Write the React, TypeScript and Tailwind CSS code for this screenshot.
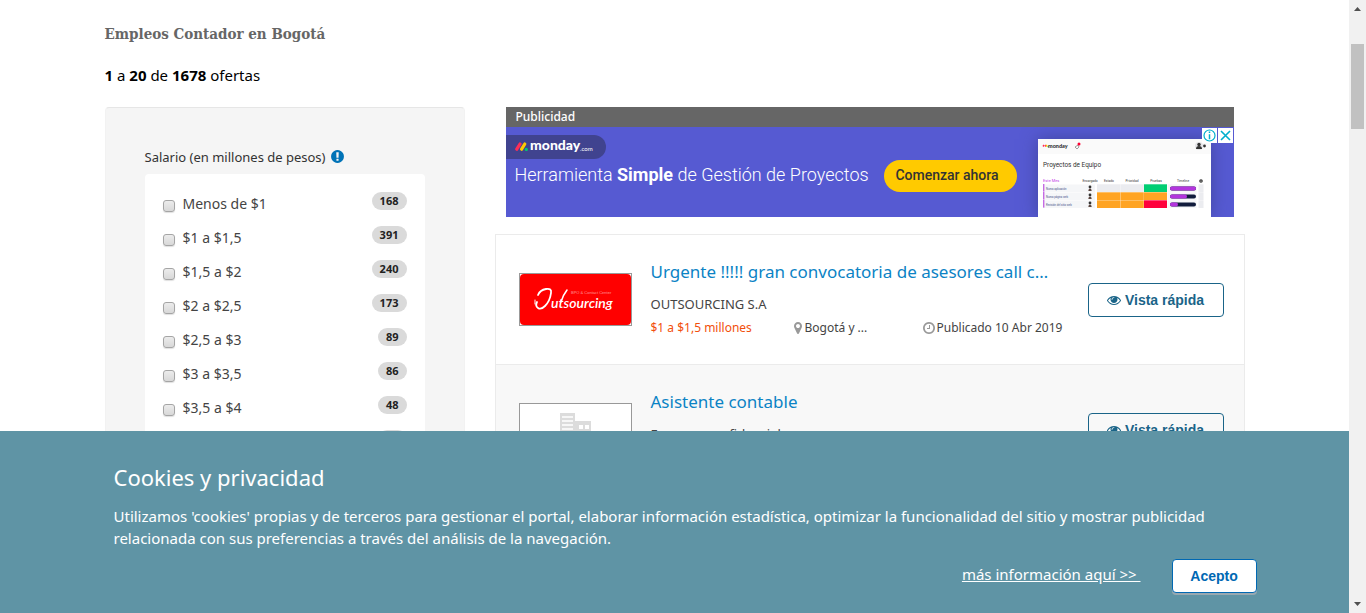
import React from "react";

const salaryRanges = [
  { label: "Menos de $1", count: 168 },
  { label: "$1 a $1,5", count: 391 },
  { label: "$1,5 a $2", count: 240 },
  { label: "$2 a $2,5", count: 173 },
  { label: "$2,5 a $3", count: 89 },
  { label: "$3 a $3,5", count: 86 },
  { label: "$3,5 a $4", count: 48 },
  { label: "$4 a $4,5", count: 36 },
];

function Glyph({ d, className }: { d: string; className: string }) {
  return (
    <svg viewBox="0 0 1792 1792" fill="currentColor" aria-hidden="true" className={className}>
      <path d={d} />
    </svg>
  );
}

const eyePath =
  "M1664 960q-152-236-381-353 61 104 61 225 0 185-131.5 316.5t-316.5 131.5-316.5-131.5-131.5-316.5q0-121 61-225-229 117-381 353 133 205 333.5 326.5t434.5 121.5 434.5-121.5 333.5-326.5zm-720-384q0-20-14-34t-34-14q-125 0-214.5 89.5t-89.5 214.5q0 20 14 34t34 14 34-14 14-34q0-86 61-147t147-61q20 0 34-14t14-34zm848 384q0 34-20 69-140 230-376.5 368.5t-499.5 138.5-499.5-139-376.5-368q-20-35-20-69t20-69q140-229 376.5-368t499.5-139 499.5 139 376.5 368q20 35 20 69z";
const clockPath =
  "M1024 544v448q0 14-9 23t-23 9h-320q-14 0-23-9t-9-23v-64q0-14 9-23t23-9h224v-352q0-14 9-23t23-9h64q14 0 23 9t9 23zm416 352q0-148-73-273t-198-198-273-73-273 73-198 198-73 273 73 273 198 198 273 73 273-73 198-198 73-273zm224 0q0 209-103 385.5t-279.5 279.5-385.5 103-385.5-103-279.5-279.5-103-385.5 103-385.5 279.5-279.5 385.5-103 385.5 103 279.5 279.5 103 385.5z";
const markerPath =
  "M1152 640q0-106-75-181t-181-75-181 75-75 181 75 181 181 75 181-75 75-181zm256 0q0 109-33 179l-364 774q-16 33-47.5 52t-67.5 19-67.5-19-46.5-52l-365-774q-33-70-33-179 0-212 150-362t362-150 362 150 150 362z";
const alertPath =
  "M896 128q209 0 385.5 103t279.5 279.5 103 385.5-103 385.5-279.5 279.5-385.5 103-385.5-103-279.5-279.5-103-385.5 103-385.5 279.5-279.5 385.5-103zm128 1247v-190q0-14-9-23.5t-22-9.5h-192q-13 0-23 10t-10 23v190q0 13 10 23t23 10h192q13 0 22-9.5t9-23.5zm-2-344l18-621q0-12-10-18-10-8-24-8h-220q-14 0-24 8-10 6-10 18l17 621q0 10 10 17.5t24 7.5h185q14 0 23.5-7.5t10.5-17.5z";

function SalaryFilter() {
  return (
    <aside className="w-[360px] shrink-0 rounded border border-[#f2f2f2] border-t-[#e6e6e6] bg-[#f5f5f5] px-[39px] pt-[39px]">
      <h2 className="flex h-[27px] items-start gap-1 text-[13px] leading-5 text-[#333]">
        Salario (en millones de pesos)
        <Glyph d={alertPath} className="mt-[2px] size-[15px] text-[#0073b7]" />
      </h2>
      <ul className="rounded bg-white py-[10px] pr-[18px] pl-[18px]">
        {salaryRanges.map((range) => (
          <li key={range.label} className="flex h-[34px] items-center justify-between">
            <label className="flex items-center gap-2 pt-[6px] text-[14px] leading-5 text-[#444]">
              <input
                type="checkbox"
                className="mt-1 size-3 appearance-none rounded-[3px] border border-[#a5a5a5] bg-linear-to-b from-[#ececec] to-[#d8d8d8] shadow-[0_1px_1px_#e0e0e0]"
              />
              {range.label}
            </label>
            <span className="rounded-full bg-[#dadada] px-2 text-[11px] leading-[18px] font-bold text-[#222]">
              {range.count}
            </span>
          </li>
        ))}
      </ul>
    </aside>
  );
}

function MondayMark() {
  return (
    <svg viewBox="0 0 82 24" className="h-6 w-[82px]" role="img" aria-label="monday.com">
      <g strokeWidth="3.2" strokeLinecap="round">
        <path d="M1.8 14.200 5 9" stroke="#ff2d57" />
        <path d="M6.6 14.200 9.800 9" stroke="#ffc900" />
      </g>
      <circle cx="11.3" cy="14.4" r="1.6" fill="#00ca72" />
      <text x="15" y="15" fill="#fff" fontFamily="Lato, sans-serif" fontSize="14" fontWeight="900">
        monday
      </text>
      <text x="65" y="16" fill="#fff" fontFamily="Lato, sans-serif" fontSize="6">
        .com
      </text>
    </svg>
  );
}

function BoardPreview() {
  const columns = [
    ["Encargado", 52],
    ["Estado", 71],
    ["Prioridad", 94],
    ["Pruebas", 118],
    ["Timeline", 145],
  ] as const;
  const rows = [
    { name: "Nueva aplicación", y: 45, a: "#ebecf0", c: "#00ce73", bar: 26 },
    { name: "Nueva página web", y: 53, a: "#ffa423", c: "#ffa423", bar: 17 },
    { name: "Revisión del sitio web", y: 61, a: "#ffa423", c: "#ff003c", bar: 8 },
  ];
  return (
    <svg viewBox="0 0 173 78" className="h-[78px] w-[173px] shadow-[0_0_16px_#40459f]" aria-hidden="true" fontFamily="Roboto, sans-serif">
      <rect width="173" height="78" fill="#fff" />
      <rect width="173" height="15" fill="#fafafa" />
      <path d="M5 7.5 6 6M7 7.5 8 6" stroke="#ff2d57" strokeWidth="1.4" />
      <path d="M8 7.5 9 6" stroke="#ffc900" strokeWidth="1.4" />
      <circle cx="10" cy="7.6" r="0.7" fill="#00ca72" />
      <text x="10" y="9" fontSize="5.5" fontFamily="Lato, sans-serif" fontWeight="900" fill="#333">monday</text>
      <path d="m37 8 3-2 1 2-2 2z" fill="none" stroke="#777" strokeWidth="0.7" />
      <circle cx="41" cy="5" r="1.5" fill="#f03" />
      <circle cx="161" cy="7" r="4" fill="#e5e5e8" />
      <circle cx="161" cy="5.5" r="1.7" fill="#333" />
      <path d="M158 10q0-3 3-3t3 3z" fill="#333" />
      <circle cx="166.5" cy="7" r="1.4" fill="#333" />
      <text x="5" y="28" fontSize="6.4" fill="#333">Proyectos de Equipo</text>
      <text x="5" y="43" fontSize="4" fill="#c33fe8">Este Mes</text>
      {columns.map(([name, x]) => (
        <text key={name} x={x} y="43" fontSize="3.2" textAnchor="middle" fill="#333">{name}</text>
      ))}
      <circle cx="163" cy="42" r="1.2" fill="none" stroke="#333" strokeWidth="1.2" />
      {rows.map((row) => (
        <g key={row.name}>
          <rect x="5" y={row.y + 0.5} width="52" height="7.5" fill="#f5f6f8" />
          <rect x="5" y={row.y} width="1.4" height="7.6" fill="#c56ae4" />
          <text x="8" y={row.y + 5.5} fontSize="2.7" fill="#45508a">{row.name}</text>
          <circle cx="52" cy={row.y + 3} r="1.4" fill="#333" />
          <path d={`M50.300 ${row.y + 7}q0-2.500 1.700-2.500t1.700 2.500z`} fill="#5a453f" />
          <rect x="59" y={row.y + 0.3} width="23.3" height="7.7" fill={row.a} />
          <rect x="82.5" y={row.y + 0.3} width="23.3" height="7.7" fill={row.a} />
          <rect x="106" y={row.y + 0.3} width="23" height="7.7" fill={row.c} />
          <rect x="129.5" y={row.y + 0.3} width="29" height="7.7" fill="#f5f6f8" />
          <rect x="132" y={row.y + 2.5} width="26" height="4" rx="2" fill="#111c3c" />
          <rect x="132" y={row.y + 2.5} width={row.bar} height="4" rx="2" fill="#b335dd" />
          <rect x="160.5" y={row.y + 0.3} width="5" height="7.7" fill="#ebecf0" />
        </g>
      ))}
    </svg>
  );
}

function AdBanner() {
  return (
    <section className="mx-[11px] text-white">
      <p className="bg-[#666] px-[10px] text-[12px] leading-5 font-medium">Publicidad</p>
      <div className="relative flex h-[90px] justify-between overflow-hidden bg-[#565ad2] pr-[23px] font-['Roboto',sans-serif]">
        <div className="flex flex-col items-start pt-2">
          <div className="flex h-6 w-[100px] items-center rounded-r-full bg-[#40438f] pl-[9px]">
            <MondayMark />
          </div>
          <p className="mt-1 pl-[9px] text-[18px] leading-6 font-light whitespace-nowrap">
            Herramienta <b className="font-bold">Simple</b> de Gestión de Proyectos
          </p>
        </div>
        <div className="flex gap-[21px]">
          <button className="mt-[33px] h-8 w-[133px] rounded-full bg-[#ffca00] pr-[6px] pb-[2px] text-[14px] font-medium text-[#333]">
            Comenzar ahora
          </button>
          <div className="pt-3">
            <BoardPreview />
          </div>
        </div>
        <div className="absolute top-px right-px flex gap-px">
          <svg viewBox="0 0 15 15" className="size-[15px] bg-white" role="img" aria-label="Información del anuncio">
            <circle cx="7.5" cy="7.5" r="5.5" fill="none" stroke="#00aecd" strokeWidth="1.2" />
            <path d="M7.5 6.2v5M7.5 3.4v1.6" stroke="#00aecd" strokeWidth="1.5" />
          </svg>
          <svg viewBox="0 0 15 15" className="size-[15px] bg-white" role="img" aria-label="Cerrar anuncio">
            <path d="m3 3 9 9M12 3l-9 9" stroke="#00aecd" strokeWidth="1.6" />
          </svg>
        </div>
      </div>
    </section>
  );
}

function OutsourcingLogo() {
  return (
    <svg viewBox="0 0 111 51" className="h-[51px] w-[111px]" role="img" aria-label="Outsourcing">
      <rect width="111" height="51" fill="#fff" />
      <rect width="111" height="51" rx="4" fill="#f00" />
      <g fill="none" stroke="#fff" strokeLinecap="round">
        <path d="M18 21q2-5 8-6 6-1 5 4-1 8-6 13-4 4-7 2-3-2-1-6" strokeWidth="1.8" />
        <path d="M47 16q-4 5-6 12" strokeWidth="1.6" />
        <path d="M15 26v4" strokeWidth="1" />
      </g>
      <text x="31" y="34" fill="#fff" fontFamily="Lato, sans-serif" fontStyle="italic" fontWeight="600" fontSize="14">
        utsourcing
      </text>
      <text x="51" y="20" fill="#ff9a9a" fontFamily="Liberation Sans, sans-serif" fontSize="4">
        BPO &amp; Contact Center
      </text>
    </svg>
  );
}

function BuildingLogo() {
  return (
    <svg viewBox="0 0 111 51" className="h-[51px] w-[111px] bg-white" role="img" aria-label="Empresa">
      <path d="M40 9h15v42H40zM55 17h16v34H55z" fill="#dcdcdc" />
      <path d="M42 13h11M42 17h11M42 21h11M42 25h11M42 29h11" stroke="#fff" strokeWidth="1.6" />
      <path d="M59 21h4v4h-4zM65 21h4v4h-4zM59 27h4v4h-4zM65 27h4v4h-4z" fill="#fff" />
    </svg>
  );
}

type OfferProps = {
  logo: React.ReactNode;
  title: string;
  company: string;
  salary?: string;
  place?: string;
  date?: string;
  className: string;
};

function Offer({ logo, title, company, salary, place, date, className }: OfferProps) {
  return (
    <article className={`flex h-[130px] items-start border-t border-[#ebebeb] pr-5 pl-[23px] ${className}`}>
      <div className="mt-[38px] shrink-0 border border-[#999]">{logo}</div>
      <div className="mt-[25px] ml-[19px] min-w-0 flex-1 text-[13px] text-[#444]">
        <h3 className="text-[17px] leading-6">
          <a href="#" className="text-[#0b83c5]">
            {title}
          </a>
        </h3>
        <p className="mt-2 h-6 leading-6">{company}</p>
        {salary && (
          <div className="flex text-[12px] leading-6 whitespace-nowrap">
            <span className="w-[140px] text-[#f24f0c]">{salary}</span>
            <span className="flex w-[131px] items-center">
              <Glyph d={markerPath} className="size-[14px] text-[#999]" />
              {place}
            </span>
            <span className="flex items-center gap-px">
              <Glyph d={clockPath} className="size-[14px] text-[#999]" />
              {date}
            </span>
          </div>
        )}
      </div>
      <button className="mt-12 flex h-[34px] w-[136px] shrink-0 items-center justify-center gap-1 rounded border border-[#1a6488] font-['Liberation_Sans',sans-serif] text-[14px] font-bold text-[#1a6488]">
        <Glyph d={eyePath} className="size-[14px]" />
        Vista rápida
      </button>
    </article>
  );
}

function CookieNotice() {
  return (
    <section className="absolute inset-x-0 bottom-0 h-[182px] bg-[#5f94a5] text-white">
      <div className="mx-auto max-w-[1170px] pt-[31px] pr-[3px] pl-6">
        <h2 className="text-[22px] leading-[30px]">Cookies y privacidad</h2>
        <p className="mt-[13px] text-[15px] leading-[22px]">
          Utilizamos 'cookies' propias y de terceros para gestionar el portal, elaborar información estadística,
          optimizar la funcionalidad del sitio y mostrar publicidad relacionada con sus preferencias a través del
          análisis de la navegación.
        </p>
        <div className="mt-[10px] flex items-start justify-end gap-[31px]">
          <a href="#" className="pt-[5px] text-[15px] leading-5 whitespace-pre underline">
            {"más información aquí >> "}
          </a>
          <button className="h-[34px] w-[85px] rounded border border-[#0068b3] bg-white font-['Liberation_Sans',sans-serif] text-[14px] font-bold text-[#0068b3] shadow-[0_2px_0_#99a8b0]">
            Acepto
          </button>
        </div>
      </div>
    </section>
  );
}

function ScrollRail() {
  return (
    <div className="flex w-[17px] shrink-0 flex-col items-center bg-[#f1f1f1]" aria-hidden="true">
      <svg viewBox="0 0 17 17" className="size-[17px]">
        <path d="M5 11h7L8.500 7z" fill="#505050" />
      </svg>
      <div className="mt-[27px] h-[85px] w-[13px] bg-[#c1c1c1]" />
      <svg viewBox="0 0 17 17" className="mt-auto size-[17px]">
        <path d="M5 6h7l-3.500 4z" fill="#505050" />
      </svg>
    </div>
  );
}

export default function App() {
  return (
    <div className="flex h-screen overflow-hidden bg-white font-['Noto_Sans',sans-serif]">
      <div className="relative min-w-0 flex-1 overflow-hidden">
        <main className="mx-auto max-w-[1140px] pt-[22px]">
          <h1 className="font-['DejaVu_Serif_Condensed','DejaVu_Serif',serif] text-[15px] leading-6 font-bold text-[#666]">
            Empleos Contador en Bogotá
          </h1>
          <p className="mt-[17px] text-[15px] leading-6 text-black">
            <b>1</b> a <b>20</b> de <b>1678</b> ofertas
          </p>
          <div className="mt-5 flex items-start gap-[30px]">
            <SalaryFilter />
            <div className="min-w-0 flex-1">
              <AdBanner />
              <div className="mt-[17px] border-x border-b border-[#ebebeb]">
                <Offer
                  className="bg-white"
                  logo={<OutsourcingLogo />}
                  title="Urgente !!!!! gran convocatoria de asesores call c…"
                  company="OUTSOURCING S.A"
                  salary="$1 a $1,5 millones"
                  place="Bogotá y ..."
                  date="Publicado 10 Abr 2019"
                />
                <Offer
                  className="bg-[#f8f8f8]"
                  logo={<BuildingLogo />}
                  title="Asistente contable"
                  company="Empresa confidencial"
                />
              </div>
            </div>
          </div>
        </main>
        <CookieNotice />
      </div>
      <ScrollRail />
    </div>
  );
}
